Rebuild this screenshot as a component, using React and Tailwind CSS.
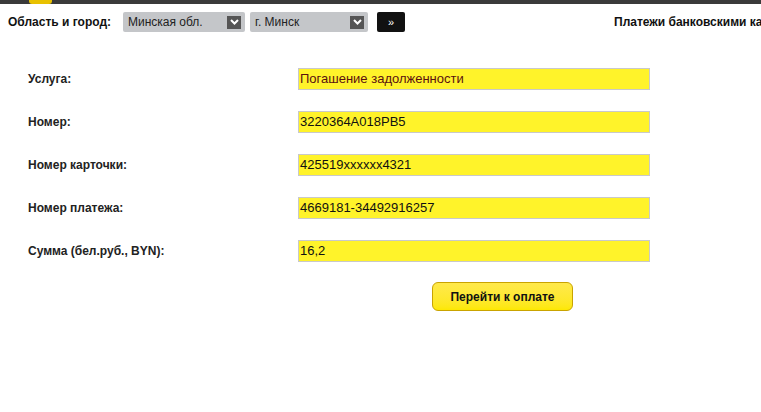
const rows = [
  ['Услуга:', 'Погашение задолженности'],
  ['Номер:', '3220364A018PB5'],
  ['Номер карточки:', '425519xxxxxx4321'],
  ['Номер платежа:', '4669181-34492916257'],
  ['Сумма (бел.руб., BYN):', '16,2'],
]

function Select({ value, w }) {
  return (
    <div className={`${w} shrink-0 h-[20px] bg-[#c4c6c9] rounded-[2px] flex items-center justify-between pl-[5px] pr-[4px] text-[12px] text-[#222]`}>
      <span>{value}</span>
      <span className="w-[14px] h-[13px] bg-[#555] flex items-center justify-center">
        <svg width="9" height="6" viewBox="0 0 9 6"><path d="M1 1l3.5 3.5L8 1" stroke="#fff" strokeWidth="2" fill="none" /></svg>
      </span>
    </div>
  )
}

export default function App() {
  return (
    <div className="w-[761px] h-[412px] bg-white overflow-hidden relative" style={{ fontFamily: '"Liberation Sans", Arial, sans-serif' }}>
      <div className="h-[4px] bg-[#3a3a3a] relative">
        <div className="absolute left-[29px] top-0 w-[23px] h-[4px] bg-[#e8c100] rounded-b-[3px]" />
      </div>
      <div className="h-[32px] flex items-center pl-[8px] pt-[4px] whitespace-nowrap">
        <span className="shrink-0 text-[12px] font-bold text-[#111] w-[115px]">Область и город:</span>
        <Select value="Минская обл." w="w-[122px]" />
        <div className="shrink-0 w-[5px]" />
        <Select value="г. Минск" w="w-[118px]" />
        <div className="shrink-0 ml-[9px] w-[28px] h-[20px] bg-[#111] rounded-[2px] text-white text-[11px] flex items-center justify-center">»</div>
        <span className="shrink-0 ml-[209px] text-[12px] font-bold text-[#111]">Платежи банковскими картами</span>
      </div>
      <div className="pt-[32px] flex flex-col gap-[21px]">
        {rows.map(([l, v]) => (
          <div key={l} className="flex items-center h-[22px]">
            <span className="pl-[28px] w-[298px] text-[12px] font-bold text-[#222]">{l}</span>
            <div className={`w-[352px] h-[22px] bg-[#fff32a] border border-[#c9c9c9] flex items-center pl-[1px] text-[13px] ${l === 'Услуга:' ? 'text-[#5a1010]' : 'text-[#111]'}`}>{v}</div>
          </div>
        ))}
      </div>
      <div className="pl-[432px] pt-[20px]">
        <button className="w-[141px] h-[29px] rounded-[6px] border border-[#c9a300] bg-gradient-to-b from-[#ffe94a] to-[#fde800] text-[12px] font-bold text-[#111]">Перейти к оплате</button>
      </div>
    </div>
  )
}
